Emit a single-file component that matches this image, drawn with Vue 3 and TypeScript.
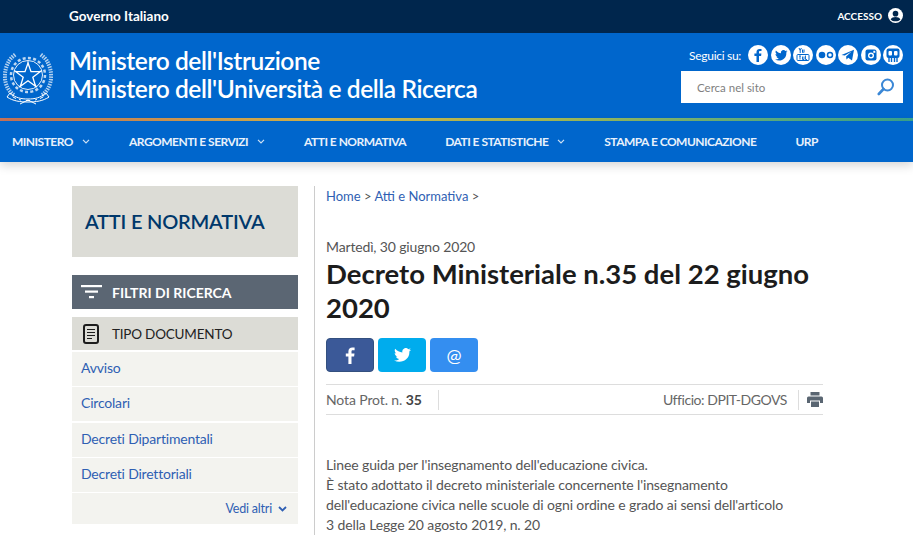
<script setup lang="ts">
const navItems = [
  { label: 'MINISTERO', caret: true },
  { label: 'ARGOMENTI E SERVIZI', caret: true },
  { label: 'ATTI E NORMATIVA', caret: false },
  { label: 'DATI E STATISTICHE', caret: true },
  { label: 'STAMPA E COMUNICAZIONE', caret: false },
  { label: 'URP', caret: false }
]

const filters = ['Avviso', 'Circolari', 'Decreti Dipartimentali', 'Decreti Direttoriali']

const bodyLines = [
  "Linee guida per l'insegnamento dell'educazione civica.",
  "È stato adottato il decreto ministeriale concernente l'insegnamento",
  "dell'educazione civica nelle scuole di ogni ordine e grado ai sensi dell'articolo",
  '3 della Legge 20 agosto 2019, n. 20'
]
</script>

<template>
  <div class="page">
    <div class="top-bar">
      <span class="gov">Governo Italiano</span>
      <span class="access">
        ACCESSO
        <svg width="15" height="15" viewBox="0 0 16 16">
          <circle cx="8" cy="8" r="8" fill="#fff" />
          <circle cx="8" cy="6" r="3" fill="#00264d" />
          <path d="M2.8 12.2c1-2 3-2.7 5.2-2.7s4.200.7 5.200 2.700c-1.200 1.300-3.100 2-5.200 2s-4-.7-5.200-2z" fill="#00264d" />
        </svg>
      </span>
    </div>

    <header class="brand">
      <svg class="emblem" width="50" height="56" viewBox="0 0 50 56" fill="none" stroke="#fff">
        <path d="M11 46C2 40-1 26 5 14c1-3 4-6 8-9" stroke-width="4" stroke-dasharray="1.500 1" opacity=".7" />
        <path d="M39 46c9-6 12-20 6-32-1-3-4-6-8-9" stroke-width="4" stroke-dasharray="1.500 1" opacity=".7" />
        <circle cx="25" cy="26" r="14.500" stroke-width=".9" />
        <circle cx="25" cy="26" r="17" stroke-width="2.500" stroke-dasharray="3 2.300" opacity=".75" />
        <path d="M25 11.500V18M11 21.500l7 2.500M39 21.500l-7 2.500M16 38l4-5M34 38l-4-5" stroke-width=".8" />
        <path d="M25 14l3 8.700h9.200l-7.400 5.600 2.800 9-7.600-5.500-7.600 5.500 2.800-9-7.400-5.600H22z" fill="#0066cc" stroke-width="1.300" />
        <path d="M7 44c6 5 11 6 18 6s12-1 18-6l3 4c-6 4-13 5-21 5S10 52 4 48z" stroke-width="1" />
        <path d="M10 48l3 1.500M16 50.500l2 .5M23 51.500h4M32 51l2-.5M37 49.500l3-1.500" stroke-width="1" />
        <path d="M17 55l8-4 8 4" stroke-width="1" />
      </svg>
      <div class="brand-title">
        <div>Ministero dell'Istruzione</div>
        <div>Ministero dell'Università e della Ricerca</div>
      </div>
      <div class="brand-tools">
        <div class="social">
          <span class="social-label">Seguici su:</span>
          <span class="social-icons">
            <svg class="soc" viewBox="0 0 20 20"><circle cx="10" cy="10" r="10" fill="#fff" /><path d="M11 17v-6h2.100l.3-2.400H11V7.200c0-.7.2-1.100 1.200-1.100h1.300V4c-.3 0-1-.1-1.900-.1-1.900 0-3.100 1.100-3.100 3.100v1.600H6.400V11h2.100v6z" fill="#0066cc" /></svg>
            <svg class="soc" viewBox="0 0 20 20"><circle cx="10" cy="10" r="10" fill="#fff" /><path d="M16.500 6.200c-.5.200-1 .4-1.500.4.500-.3 1-.8 1.200-1.400-.5.300-1.100.5-1.700.7a2.700 2.700 0 0 0-4.600 2.400C8.200 8.200 6.200 7.200 4.900 5.600c-.7 1.200-.4 2.800.8 3.600-.4 0-.8-.1-1.200-.3 0 1.300.9 2.400 2.100 2.700-.4.100-.8.100-1.200 0 .3 1.100 1.300 1.800 2.500 1.900-1.100.8-2.500 1.200-3.900 1 5.700 3.100 12-1 11.300-7.100.6-.4 1-.9 1.200-1.200z" fill="#0066cc" /></svg>
            <svg class="soc" viewBox="0 0 20 20"><circle cx="10" cy="10" r="10" fill="#fff" /><path d="M6 3l1.200 2.500L8.400 3M7.200 5.500V8M9.500 4.500v3h1M11 4.500v3M5 9.500h10a1 1 0 0 1 1 1v4a1 1 0 0 1-1 1H5a1 1 0 0 1-1-1v-4a1 1 0 0 1 1-1z" fill="none" stroke="#0066cc" stroke-width="1" /><path d="M6 11h2M7 11v3.500M9.500 11.500v3h1.500v-3M12.500 10.500v4h1.500" fill="none" stroke="#0066cc" stroke-width=".9" /></svg>
            <svg class="soc" viewBox="0 0 20 20"><circle cx="10" cy="10" r="10" fill="#fff" /><circle cx="6" cy="10" r="3.300" fill="#0066cc" /><circle cx="14" cy="10" r="2.500" fill="none" stroke="#0066cc" stroke-width="1.500" /></svg>
            <svg class="soc" viewBox="0 0 20 20"><circle cx="10" cy="10" r="10" fill="#fff" /><path d="M3.500 10L16 4.800 14 15.500l-3.700-2.800-1.800 1.900-.4-3.200 5.500-5-6.800 4.200z" fill="#0066cc" /></svg>
            <svg class="soc" viewBox="0 0 20 20"><circle cx="10" cy="10" r="10" fill="#fff" /><rect x="4.500" y="4.500" width="11" height="11" rx="2" fill="#0066cc" /><circle cx="10" cy="10.500" r="3" fill="#fff" /><circle cx="10" cy="10.500" r="1.600" fill="#0066cc" /><rect x="12.300" y="5.800" width="2" height="2" fill="#fff" /></svg>
            <svg class="soc" viewBox="0 0 20 20"><circle cx="10" cy="10" r="10" fill="#fff" /><rect x="3.500" y="3.500" width="13" height="9.500" rx="2" fill="#0066cc" /><rect x="5.500" y="6" width="3.500" height="4.500" rx="1" fill="#fff" /><rect x="11" y="6" width="3.500" height="4.500" rx="1" fill="#fff" /><path d="M6 13v4M8.500 13v4M11.500 13v4M14 13v4" stroke="#0066cc" stroke-width="1.400" /></svg>
          </span>
        </div>
        <div class="search">
          <span>Cerca nel sito</span>
          <svg width="18" height="18" viewBox="0 0 18 18" fill="none" stroke="#3a87d6">
            <circle cx="10.500" cy="7" r="5.500" stroke-width="2" />
            <path d="M6.500 11L1.800 16" stroke-width="2.600" stroke-linecap="round" />
          </svg>
        </div>
      </div>
    </header>

    <div class="rainbow"></div>

    <nav class="nav">
      <span v-for="item in navItems" :key="item.label" class="nav-item">
        {{ item.label }}
        <svg v-if="item.caret" class="caret" width="8" height="5" viewBox="0 0 8 5" fill="none" stroke="#cfe2f5" stroke-width="1.200"><path d="M1 .8l3 3 3-3" /></svg>
      </span>
    </nav>

    <main class="main">
      <aside class="side">
        <div class="side-title">ATTI E NORMATIVA</div>
        <div class="filter-head">
          <svg width="21" height="14" viewBox="0 0 21 14" fill="#fff"><rect width="21" height="2.200" /><rect x="4" y="5.500" width="13" height="2.200" /><rect x="8" y="11" width="5" height="2.200" /></svg>
          FILTRI DI RICERCA
        </div>
        <div class="type-head">
          <svg width="16" height="20" viewBox="0 0 16 20" fill="none" stroke="#1c1c1c"><rect x="1" y="1" width="14" height="18" rx="2" stroke-width="2" /><path d="M4 5.500h8M4 8.500h8M4 11.500h8M4 14.500h5" stroke-width="1.200" /></svg>
          TIPO DOCUMENTO
        </div>
        <ul class="filter-list">
          <li v-for="f in filters" :key="f">{{ f }}</li>
          <li class="more">
            Vedi altri
            <svg width="9" height="6" viewBox="0 0 9 6" fill="none" stroke="#2f5fb3" stroke-width="1.800"><path d="M1 1l3.500 3.500L8 1" /></svg>
          </li>
        </ul>
      </aside>

      <article class="content">
        <div class="crumbs"><span>Home</span> &gt; <span>Atti e Normativa</span> &gt;</div>
        <div class="date">Martedì, 30 giugno 2020</div>
        <h1>Decreto Ministeriale n.35 del 22 giugno 2020</h1>
        <div class="share">
          <span class="btn fb">
            <svg width="10" height="17" viewBox="0 0 10 17" fill="#fff"><path d="M6.500 17V9.500h2.600l.4-3H6.500V4.700c0-.9.300-1.400 1.500-1.400h1.600V.6C9.300.5 8.400.5 7.300.5 5 .5 3.400 1.900 3.400 4.400v2.100H.8v3h2.600V17z" /></svg>
          </span>
          <span class="btn tw">
            <svg width="17" height="14" viewBox="0 0 17 14" fill="#fff"><path d="M17 1.700c-.6.300-1.300.5-2 .5.700-.4 1.300-1.100 1.600-1.900-.7.400-1.400.7-2.200.9A3.500 3.500 0 0 0 8.400 4.400C5.500 4.300 3 2.900 1.200.8.300 2.400.7 4.400 2.300 5.500c-.6 0-1.100-.2-1.600-.4 0 1.700 1.200 3.100 2.800 3.500-.5.100-1 .1-1.600 0 .5 1.400 1.800 2.400 3.300 2.400-1.500 1.200-3.400 1.700-5.200 1.500C8 16.300 16.200 11 15.300 3.400c.7-.5 1.300-1 1.700-1.700z" /></svg>
          </span>
          <span class="btn mail">@</span>
        </div>
        <div class="meta">
          <span class="prot">Nota Prot. n. <b>35</b></span>
          <span class="office">Ufficio: DPIT-DGOVS</span>
          <span class="print">
            <svg width="16" height="15" viewBox="0 0 16 15" fill="#5a6672"><path d="M3.500 0h9v3.500h-9zM1.500 4.500h13A1.500 1.500 0 0 1 16 6v5h-3V8.500H3V11H0V6a1.500 1.500 0 0 1 1.500-1.500zM4 9.500h8V15H4z" /></svg>
          </span>
        </div>
        <p class="body-text">
          <template v-for="line in bodyLines" :key="line">{{ line }}<br /></template>
        </p>
      </article>
    </main>
  </div>
</template>

<style>
html,
body {
  margin: 0;
  overflow: hidden;
}
</style>

<style scoped>
.page {
  height: 535px;
  overflow: hidden;
  background: #fff;
  font-family: Lato, "Open Sans", sans-serif;
  color: #555;
}

.top-bar {
  height: 33px;
  background: #00264d;
  color: #fff;
  display: flex;
  align-items: center;
  justify-content: space-between;
  padding: 0 10px 2px 69px;
  box-sizing: border-box;
  font-weight: 700;
}

.gov {
  font-size: 13.500px;
}

.access {
  display: flex;
  align-items: center;
  gap: 6px;
  font-size: 10px;
}

.brand {
  height: 85px;
  background: #0066cc;
  color: #fff;
  display: flex;
  position: relative;
}

.emblem {
  margin: 16px 0 0 3px;
}

.brand-title {
  margin: 14px 0 0 16px;
  font-size: 24.500px;
  font-weight: 600;
  line-height: 28px;
  letter-spacing: -0.4px;
}

.brand-tools {
  margin-left: auto;
  padding: 12px 10px 0 0;
  width: 222px;
}

.social {
  display: flex;
  align-items: center;
  justify-content: flex-end;
  gap: 7px;
  height: 20px;
}

.social-label {
  font-size: 12px;
  white-space: nowrap;
  letter-spacing: -0.3px;
}

.social-icons {
  display: flex;
  gap: 2.500px;
}

.soc {
  width: 20px;
  height: 20px;
  display: block;
}

.search {
  margin-top: 6px;
  height: 32px;
  background: #fff;
  display: flex;
  align-items: center;
  justify-content: space-between;
  padding: 0 8px 0 16px;
  font-size: 11.500px;
  color: #808080;
}

.rainbow {
  height: 3px;
  background: linear-gradient(90deg, #c9745a 0%, #d8b84a 35%, #a9bd55 60%, #5cb083 85%, #3aa58f 100%);
}

.nav {
  height: 41px;
  background: #0066cc;
  box-shadow: 0 3px 10px rgba(0, 0, 0, 0.18);
  display: flex;
  align-items: center;
  padding-left: 12px;
  gap: 39px;
  position: relative;
}

.nav-item {
  color: #e8f1fb;
  font-size: 12px;
  font-weight: 700;
  letter-spacing: -0.52px;
  white-space: nowrap;
  display: flex;
  align-items: center;
  gap: 9px;
}

.main {
  display: flex;
  padding: 24px 0 0 72px;
}

.side {
  width: 226px;
  flex: none;
}

.side-title {
  height: 71px;
  background: #dcdcd6;
  color: #00386b;
  display: flex;
  align-items: center;
  padding: 0 0 2px 13px;
  box-sizing: border-box;
  font-size: 20px;
  font-weight: 600;
  letter-spacing: -0.2px;
}

.filter-head {
  margin-top: 18px;
  height: 34px;
  background: #5b6673;
  color: #fff;
  display: flex;
  align-items: center;
  gap: 10px;
  padding-left: 9px;
  font-size: 14px;
  font-weight: 700;
}

.type-head {
  margin-top: 8px;
  height: 33px;
  background: #dcdcd6;
  color: #222;
  display: flex;
  align-items: center;
  gap: 13px;
  padding-left: 11px;
  font-size: 13.500px;
  letter-spacing: -0.2px;
}

.filter-list {
  list-style: none;
  margin: 2px 0 0;
  padding: 0;
}

.filter-list li {
  height: 34px;
  box-sizing: border-box;
  padding: 0 0 3px 9px;
  margin-bottom: 1.300px;
  background: #f3f3ef;
  color: #2f5fb3;
  font-size: 14px;
  letter-spacing: -0.2px;
  display: flex;
  align-items: center;
}

.filter-list li.more {
  height: 31px;
  justify-content: flex-end;
  gap: 6px;
  padding: 0 11px 0 0;
  font-size: 12.500px;
  margin: 0;
}

.content {
  width: 497px;
  margin-left: 16px;
  padding-left: 11px;
  border-left: 1px solid #ccc;
  height: 349px;
}

.crumbs {
  font-size: 13px;
  line-height: 20px;
  color: #555;
}

.crumbs span {
  color: #2f5fb3;
}

.date {
  margin-top: 31px;
  font-size: 14px;
  letter-spacing: -0.15px;
  line-height: 20px;
}

h1 {
  margin: 0;
  font-size: 27.500px;
  line-height: 34px;
  font-weight: 700;
  color: #1c1c1c;
}

.share {
  display: flex;
  gap: 4px;
  margin-top: 13px;
}

.btn {
  width: 48px;
  height: 34px;
  box-sizing: border-box;
  border-radius: 4px;
  display: flex;
  align-items: center;
  justify-content: center;
  color: #fff;
  font-size: 18px;
}

.fb {
  background: #3b5998;
  border: 1px solid #33507f;
}

.tw {
  background: #00aced;
}

.mail {
  background: #348ef0;
}

.meta {
  margin-top: 12px;
  height: 29px;
  border-top: 1px solid #ddd;
  border-bottom: 1px solid #ddd;
  display: flex;
  align-items: center;
  font-size: 14px;
  color: #666;
}

.prot {
  padding-right: 16px;
  height: 20px;
  line-height: 20px;
  letter-spacing: -0.12px;
  border-right: 1px solid #ddd;
}

.prot b {
  color: #444;
}

.office {
  margin-left: auto;
  padding-right: 11px;
  letter-spacing: -0.45px;
}

.print {
  border-left: 1px solid #ddd;
  padding-left: 8px;
  height: 20px;
  display: flex;
  align-items: center;
}

.body-text {
  margin: 40px 0 0;
  font-size: 14px;
  letter-spacing: -0.12px;
  line-height: 20px;
  color: #555;
  white-space: nowrap;
}
</style>
